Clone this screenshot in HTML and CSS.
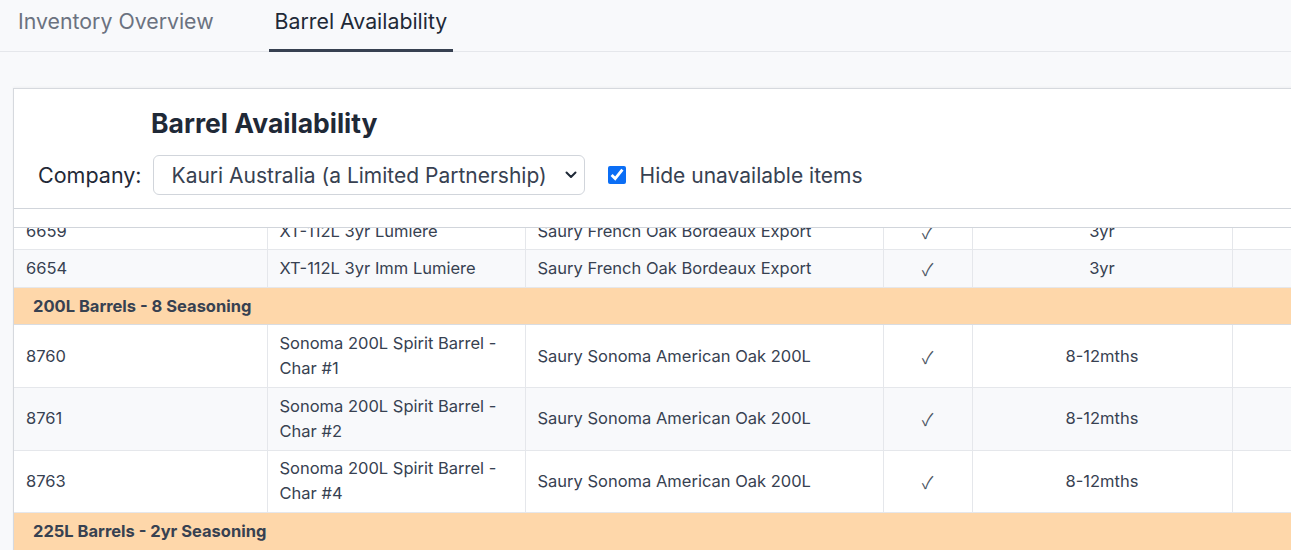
FILE: index.html
```html
<!DOCTYPE html>
<html lang="en">
<head>
<meta charset="utf-8">
<title>Barrel Availability</title>
<link rel="stylesheet" href="styles.css">
</head>
<body>
<nav class="tabs">
  <a class="tab">Inventory Overview</a>
  <a class="tab active">Barrel Availability</a>
</nav>
<section class="card">
  <header class="card-head">
    <h1 class="title">Barrel Availability</h1>
    <div class="filters">
      <label class="company-label" for="company">Company:</label>
      <div class="select-wrap">
        <select id="company" class="select">
          <option>Kauri Australia (a Limited Partnership)</option>
        </select>
        <svg class="chevron" width="12" height="8" viewBox="0 0 12 8"><path d="M1.5 1.5 6 6l4.5-4.5" fill="none" stroke="#1f2937" stroke-width="2" stroke-linecap="round" stroke-linejoin="round"/></svg>
      </div>
      <label class="check">
        <input type="checkbox" checked>
        <span>Hide unavailable items</span>
      </label>
    </div>
  </header>
  <div class="thead-bar"></div>
  <div class="scroll">
    <table class="grid">
      <colgroup>
        <col class="c1"><col class="c2"><col class="c3"><col class="c4"><col class="c5"><col class="c6">
      </colgroup>
      <tbody>
        <tr>
          <td>6659</td><td>XT-112L 3yr Lumiere</td><td>Saury French Oak Bordeaux Export</td><td class="mid tick">✓</td><td class="mid">3yr</td><td></td>
        </tr>
        <tr class="alt">
          <td>6654</td><td>XT-112L 3yr Imm Lumiere</td><td>Saury French Oak Bordeaux Export</td><td class="mid tick">✓</td><td class="mid">3yr</td><td></td>
        </tr>
        <tr class="group"><td colspan="6">200L Barrels - 8 Seasoning</td></tr>
        <tr>
          <td>8760</td><td>Sonoma 200L Spirit Barrel - Char #1</td><td>Saury Sonoma American Oak 200L</td><td class="mid tick">✓</td><td class="mid">8-12mths</td><td></td>
        </tr>
        <tr class="alt">
          <td>8761</td><td>Sonoma 200L Spirit Barrel - Char #2</td><td>Saury Sonoma American Oak 200L</td><td class="mid tick">✓</td><td class="mid">8-12mths</td><td></td>
        </tr>
        <tr>
          <td>8763</td><td>Sonoma 200L Spirit Barrel - Char #4</td><td>Saury Sonoma American Oak 200L</td><td class="mid tick">✓</td><td class="mid">8-12mths</td><td></td>
        </tr>
        <tr class="group"><td colspan="6">225L Barrels - 2yr Seasoning</td></tr>
      </tbody>
    </table>
  </div>
</section>
</body>
</html>
```
FILE: styles.css
```css
* { box-sizing: border-box; }
html, body { margin: 0; height: 100%; overflow: hidden; }
body {
  background: #f8f9fb;
  font-family: Inter, "Noto Sans", sans-serif;
  color: #374151;
  width: 1291px;
}
.tabs {
  display: flex;
  gap: 49px;
  padding-left: 12px;
  height: 52px;
  border-bottom: 1px solid #e5e7eb;
}
.tab {
  display: block;
  padding: 9px 6px 15px;
  font-size: 21.3px;
  line-height: 25px;
  color: #6b7280;
  border-bottom: 3px solid transparent;
  height: 52px;
}
.tab.active {
  color: #1f2937;
  border-bottom-color: #374151;
}
.card {
  margin: 36px 0 0 13px;
  width: 1420px;
  background: #fff;
  border-top: 1px solid #d6d9de;
  border-left: 1px solid #d6d9de;
  box-shadow: 0 -1px 2px rgba(0,0,0,0.04);
}
.card-head {
  padding: 17px 0 13px;
  border-bottom: 1px solid #d1d5db;
}
.title {
  margin: 0 0 15px 137px;
  font-size: 26.5px;
  line-height: 34px;
  font-weight: 700;
  color: #1f2937;
}
.filters {
  display: flex;
  align-items: center;
  padding-left: 24px;
}
.company-label {
  font-size: 21.5px;
  color: #1f2937;
  margin-right: 11px;
}
.select-wrap {
  position: relative;
  width: 432px;
  height: 40px;
}
.select {
  appearance: none;
  -webkit-appearance: none;
  width: 100%;
  height: 100%;
  border: 1px solid #d1d5db;
  border-radius: 6px;
  background: #fff;
  font-family: inherit;
  font-size: 21px;
  color: #374151;
  padding: 0 28px 0 18px;
}
.chevron {
  position: absolute;
  right: 8px;
  top: 16px;
  pointer-events: none;
}
.check {
  display: flex;
  align-items: center;
  margin-left: 23px;
  font-size: 21px;
  color: #374151;
}
.check input {
  width: 18px;
  height: 18px;
  margin: 0 14px 0 0;
  accent-color: #0b6ef5;
}
.thead-bar {
  height: 19px;
  border-bottom: 1px solid #d1d5db;
}
.scroll {
  height: 330px;
  overflow: hidden;
}
.grid {
  border-collapse: collapse;
  table-layout: fixed;
  width: 100%;
  margin-top: -16px;
  font-size: 16.5px;
  line-height: 25.1px;
  color: #374151;
}
.c1 { width: 253px; }
.c2 { width: 258px; }
.c3 { width: 358px; }
.c4 { width: 89px; }
.c5 { width: 260px; }
.grid td {
  padding: 5.7px 12px;
  border: 1px solid #e5e7eb;
  vertical-align: middle;
}
.grid td:first-child { border-left: 0; }
.grid td.mid { text-align: center; }
.grid td.tick {
  font-family: "Noto Sans CJK JP", "DejaVu Sans", sans-serif;
  font-size: 17px;
  color: #4b5563;
}
.grid tr.alt td { background: #f8f9fb; }
.grid tr.group td {
  background: #fed7aa;
  font-weight: 700;
  padding-left: 19px;
  border-color: #d9dce1;
}
```
